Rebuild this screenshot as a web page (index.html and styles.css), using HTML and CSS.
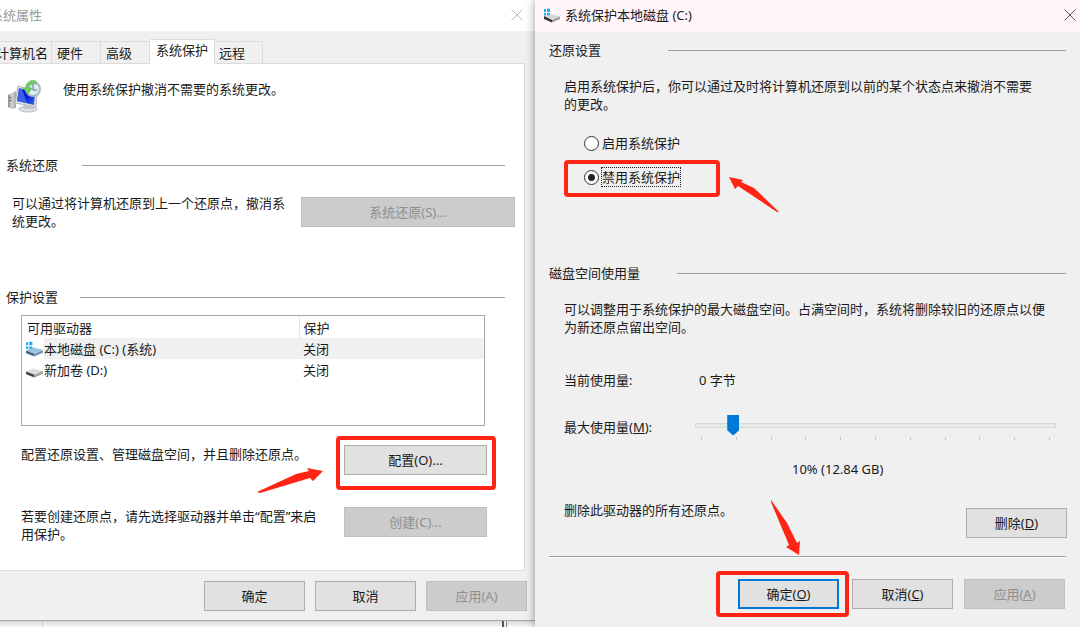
FILE: index.html
```
<!DOCTYPE html>
<html lang="zh-CN">
<head>
    <meta charset="UTF-8">
    <title>系统保护</title>
    <link rel="stylesheet" href="styles.css">
</head>
<body>

    <div class="left-side">
        <div class="window">
            <div class="title-bar inactive">
                <span class="title cut-title">系统属性</span>
                <button class="close" aria-label="关闭">
                    <svg width="12" height="12" viewBox="0 0 12 12"><path d="M0.5 0.5L11.5 11.5M11.5 0.5L0.5 11.5" stroke="currentColor" fill="none"/></svg>
                </button>
            </div>

            <div class="tabs">
                <button class="tab tab-first">计算机名</button>
                <button class="tab">硬件</button>
                <button class="tab">高级</button>
                <button class="tab active">系统保护</button>
                <button class="tab tab-last">远程</button>
            </div>

            <div class="panel">
                <div class="intro">
                    <svg width="34" height="34" viewBox="0 0 34 34">
                        <defs>
                            <linearGradient id="screen" x1="0" y1="0" x2="1" y2="1">
                                <stop offset="0" stop-color="#0a1fb8"/>
                                <stop offset="0.5" stop-color="#0a18d0"/>
                                <stop offset="1" stop-color="#2f6df0"/>
                            </linearGradient>
                            <linearGradient id="tower" x1="0" y1="0" x2="1" y2="0">
                                <stop offset="0" stop-color="#8d8d8d"/>
                                <stop offset="0.5" stop-color="#d6d6d6"/>
                                <stop offset="1" stop-color="#a5a5a5"/>
                            </linearGradient>
                        </defs>
                        <path d="M0 15L8 11V28L4 29L0 27Z" fill="url(#tower)"/>
                        <path d="M1 17L4 18M1 20L4 21" stroke="#777"/>
                        <ellipse cx="20" cy="29" rx="9" ry="3" fill="#e0e2e4" stroke="#b8bcbf"/>
                        <path d="M16 24L25 26L26 29H15Z" fill="#c4c8cb"/>
                        <path d="M10 6L29 12L28 27L7 23Z" fill="#dfe3e6" stroke="#b4b8bb"/>
                        <path d="M11 8L27 13L26 25L9 21Z" fill="url(#screen)"/>
                        <path d="M11 8L14 9L19 23L9 21Z" fill="#6aa5ff" opacity="0.5"/>
                        <circle cx="25" cy="9" r="7" fill="#dcecf2" stroke="#a9bcc4" stroke-width="2"/>
                        <path d="M25 4V10H29" stroke="#5c7480" fill="none"/>
                        <path d="M28 1C23 -1 18 2 18 8L15 8L20 14L24 8H21C21 5 24 3 28 4Z" fill="#6fd066" stroke="#43a648" stroke-width="0.5"/>
                    </svg>
                    <p>使用系统保护撤消不需要的系统更改。</p>
                </div>

                <h2 class="section restore-head">系统还原</h2>
                <div class="row restore-row">
                    <p>可以通过将计算机还原到上一个还原点，撤消系<br>统更改。</p>
                    <button class="btn restore-btn" disabled>系统还原(S)...</button>
                </div>

                <h2 class="section protect-head">保护设置</h2>
                <div class="drive-box">
                    <table class="drives">
                        <thead>
                            <tr><th class="name-col">可用驱动器</th><th>保护</th></tr>
                        </thead>
                        <tbody>
                            <tr class="selected">
                                <td>
                                    <div class="drive">
                                        <svg width="18" height="16" viewBox="0 0 18 16">
                                            <path d="M1 2L3 2V5H1ZM4 1.700L7 1.500V5H4ZM1 6H3V8.500H1ZM4 6H7V9H4Z" fill="#12b2f0"/>
                                            <path d="M1 10L8 7L17 9.500L9 13Z" fill="#9fc3de"/>
                                            <path d="M1 10L9 13V15.500L1 12.500Z" fill="#49657a"/>
                                            <path d="M9 13L17 9.500V12L9 15.500Z" fill="#7198b5"/>
                                        </svg>
                                        <span>本地磁盘 (C:) (系统)</span>
                                    </div>
                                </td>
                                <td>关闭</td>
                            </tr>
                            <tr>
                                <td>
                                    <div class="drive">
                                        <svg width="18" height="16" viewBox="0 0 18 16">
                                            <path d="M1 10L8 7L17 9.500L9 13Z" fill="#dcdcdc"/>
                                            <path d="M1 10L9 13V15.500L1 12.500Z" fill="#444"/>
                                            <path d="M9 13L17 9.500V12L9 15.500Z" fill="#a3a3a3"/>
                                        </svg>
                                        <span>新加卷 (D:)</span>
                                    </div>
                                </td>
                                <td>关闭</td>
                            </tr>
                        </tbody>
                    </table>
                </div>

                <div class="row action-row">
                    <p>配置还原设置、管理磁盘空间，并且删除还原点。</p>
                    <div class="marked mark-config">
                        <button class="btn action-btn">配置(O)...</button>
                        <svg class="arrow arrow-config" width="68" height="28" viewBox="0 0 68 28"><path d="M1 25L40 7L53 4L51 1L67 4L57 14L54 11L4 26Z" fill="#ff2414"/></svg>
                    </div>
                </div>
                <div class="row action-row create-row">
                    <p>若要创建还原点，请先选择驱动器并单击“配置”来启<br>用保护。</p>
                    <button class="btn action-btn" disabled>创建(C)...</button>
                </div>
            </div>

            <div class="buttons left-buttons">
                <button class="btn">确定</button>
                <button class="btn">取消</button>
                <button class="btn" disabled>应用(A)</button>
            </div>
        </div>
        <div class="behind"><span class="edge"></span><span class="edge edge-dark"></span></div>
    </div>

    <div class="window dialog">
        <div class="title-bar">
            <svg width="18" height="16" viewBox="0 0 18 16">
                <path d="M1 2L3 2V5H1ZM4 1.700L7 1.500V5H4ZM1 6H3V8.500H1ZM4 6H7V9H4Z" fill="#12b2f0"/>
                <path d="M1 10L8 7L17 9.500L9 13Z" fill="#d4d8d6"/>
                <path d="M1 9L9 13V15.500L1 12Z" fill="#333"/>
                <path d="M9 13L17 9.500V12L9 15.500Z" fill="#9a9d9b"/>
            </svg>
            <span class="title">系统保护本地磁盘 (C:)</span>
            <button class="close" aria-label="关闭">
                <svg width="12" height="12" viewBox="0 0 12 12"><path d="M0.5 0.5L11.5 11.5M11.5 0.5L0.5 11.5" stroke="currentColor" fill="none"/></svg>
            </button>
        </div>

        <div class="dialog-body">
            <h2 class="section settings-head">还原设置</h2>
            <p class="desc">启用系统保护后，你可以通过及时将计算机还原到以前的某个状态点来撤消不需要<br>的更改。</p>

            <div class="radios">
                <label class="radio"><input type="radio" name="protect"><span>启用系统保护</span></label>
                <div class="marked mark-radio">
                    <label class="radio"><input type="radio" name="protect" checked><span class="focused">禁用系统保护</span></label>
                    <svg class="arrow arrow-radio" width="54" height="38" viewBox="0 0 54 38"><path d="M2 2L16 5L14 7L27 13L52 37L50 37L11 11L8 14Z" fill="#ff2414"/></svg>
                </div>
            </div>

            <h2 class="section usage-head">磁盘空间使用量</h2>
            <p class="desc">可以调整用于系统保护的最大磁盘空间。占满空间时，系统将删除较旧的还原点以便<br>为新还原点留出空间。</p>

            <div class="usage">
                <span>当前使用量:</span>
                <span class="used">0 字节</span>
                <label for="max-usage">最大使用量(<u>M</u>):</label>
                <div class="slider">
                    <input type="range" id="max-usage" min="0" max="100" value="9">
                    <div class="ticks"><i></i><i></i><i></i><i></i><i></i><i></i><i></i><i></i><i></i><i></i><i></i></div>
                </div>
            </div>
            <p class="amount">10% (12.84 GB)</p>

            <div class="row delete-row">
                <p>删除此驱动器的所有还原点。</p>
                <button class="btn">删除(<u>D</u>)</button>
            </div>
            <hr>
            <div class="buttons dialog-buttons">
                <div class="marked mark-ok">
                    <button class="btn default">确定(<u>O</u>)</button>
                    <svg class="arrow arrow-ok" width="34" height="60" viewBox="0 0 34 60"><path d="M3 2L19 25L29 45L32 43L31 57L18 49L21 47L3 4Z" fill="#ff2414"/></svg>
                </div>
                <button class="btn">取消(<u>C</u>)</button>
                <button class="btn" disabled>应用(<u>A</u>)</button>
            </div>
        </div>
    </div>

</body>
</html>
```
FILE: styles.css
```
* {
    box-sizing: border-box;
}
body {
    margin: 0;
    min-height: 100vh;
    display: grid;
    grid-template-columns: 535fr 545fr;
    font-family: "Noto Sans", "Noto Sans CJK SC", sans-serif;
    font-size: 13px;
    line-height: 18px;
    color: #1a1a1a;
    background-color: #f0f0f0;
    overflow: hidden;
}
p, h2 {
    margin: 0;
    font-size: 13px;
    font-weight: normal;
}
button {
    font: inherit;
    color: inherit;
}
svg {
    display: block;
    flex: none;
}
.left-side {
    display: flex;
    flex-direction: column;
    min-width: 0;
    overflow: hidden;
}
.window {
    flex: 1;
    display: flex;
    flex-direction: column;
    min-width: 0;
    background-color: #f0f0f0;
}
.left-side .window {
    border-bottom: 1px solid #a8a8a8;
}
.behind {
    height: 6px;
    display: flex;
    justify-content: space-between;
    padding: 0 28px 0 42px;
    background: linear-gradient(#d8d8d8, #f8f8f8);
}
.edge {
    width: 1px;
    background-color: #ccc;
}
.edge-dark {
    width: 5px;
    background-color: #eee;
    border-left: 2px solid #555;
    border-right: 1px solid #888;
}

/* 标题栏 */
.title-bar {
    display: flex;
    align-items: center;
    height: 32px;
    padding: 0 4px 2px 8px;
    background-color: #fff5fb;
}
.title-bar.inactive {
    height: 31px;
    padding: 0 12px 2px 0;
    background-color: #fff;
    color: #999;
}
.title {
    flex: 1;
    margin-left: 4px;
}
.cut-title {
    margin-left: -10px;
}
.close {
    padding: 0;
    border: none;
    background: none;
    color: #555;
}
.inactive .close {
    color: #bbb;
}

/* 选项卡 */
.tabs {
    display: flex;
    align-items: flex-end;
    height: 32px;
    margin-left: -9px;
}
.tab {
    height: 22px;
    padding: 0 17px 0 5px;
    border: 1px solid #dcdcdc;
    border-left: none;
    border-bottom: none;
    background-color: #f0f0f0;
    text-align: left;
}
.tab-first {
    padding-right: 3px;
}
.tab.active {
    height: 24px;
    padding: 0 6px 2px;
    background-color: #fff;
    margin-bottom: -1px;
    padding-bottom: 4px;
    height: 25px;
    position: relative;
}
.tab-last {
    padding-left: 4px;
}
.panel {
    flex: 1;
    margin-right: 10px;
    padding: 16px 9px 0 0;
    border: 1px solid #dcdcdc;
    border-left: none;
    background-color: #fff;
}
.intro {
    display: flex;
    gap: 21px;
    padding-left: 8px;
}
.section {
    display: flex;
    align-items: center;
}
.section::after {
    content: "";
    flex: 1;
    height: 1px;
    background-color: #a0a0a0;
}
.restore-head {
    gap: 24px;
    margin: 42px 10px 0 6px;
}
.row {
    display: flex;
    justify-content: space-between;
    align-items: flex-start;
}
.restore-row {
    margin-top: 20px;
    padding-left: 12px;
}
.restore-row .restore-btn {
    width: 214px;
    margin-top: 3px;
}
.protect-head {
    gap: 22px;
    margin: 58px 10px 0 6px;
}
.drive-box {
    height: 111px;
    margin: 9px 30px 0 21px;
    border: 1px solid #a5a8b0;
}
.drives {
    width: 100%;
    border-collapse: collapse;
    table-layout: fixed;
}
.drives th, .drives td {
    height: 21px;
    padding: 0 4px;
    font-weight: normal;
    text-align: left;
}
.drives th {
    height: 22px;
    padding-top: 1px;
}
.drives .name-col {
    width: 277px;
    padding-left: 5px;
    border-right: 1px solid #e5e5e5;
}
.drives tbody td:first-child {
    padding-left: 0;
}
.selected {
    background-color: #f0f0f0;
}
.drive {
    display: flex;
    align-items: center;
}
.drive svg {
    width: 22px;
    height: 21px;
    padding-left: 3px;
    background-color: #fff;
}
.action-row {
    margin-top: 19px;
    padding: 0 28px 0 21px;
}
.create-row {
    margin-top: 32px;
}

/* 按钮 */
.btn {
    width: 101px;
    height: 30px;
    padding: 0;
    border: 1px solid #adadad;
    background-color: #e1e1e1;
}
.btn:disabled {
    border-color: #bfbfbf;
    background-color: #ccc;
    color: #8f8f8f;
}
.btn.default {
    border: 2px solid #0078d7;
}
.btn.action-btn {
    width: 143px;
}
.buttons {
    display: flex;
    justify-content: flex-end;
    gap: 11px;
}
.left-buttons {
    gap: 10px;
    padding: 10px 8px 9px;
}
.dialog-buttons {
    padding-right: 1px;
}

/* 红色标注 */
.marked {
    position: relative;
}
.marked::before {
    content: "";
    position: absolute;
    border: 4px solid #ff2414;
    border-radius: 4px;
    pointer-events: none;
}
.mark-config::before {
    inset: -9px -9px -15px -8px;
}
.mark-radio::before {
    inset: -8px -40px -11px -20px;
}
.mark-ok {
    margin-right: 2px;
}
.mark-ok::before {
    inset: -8px -10px -8px -22px;
}
.arrow {
    position: absolute;
}
.arrow-config {
    right: 163px;
    top: 22px;
}
.arrow-radio {
    left: 143px;
    top: 7px;
}
.arrow-ok {
    left: 30px;
    top: -81px;
}

/* 右侧对话框 */
.dialog {
    position: relative;
    box-shadow: 0 0 9px rgba(0, 0, 0, 0.4);
}
.dialog-body {
    padding: 9px 14px 0;
}
.settings-head {
    gap: 67px;
}
.desc {
    margin: 18px 0 0 15px;
    white-space: nowrap;
}
.radios {
    display: flex;
    flex-direction: column;
    align-items: flex-start;
    gap: 16px;
    margin: 21px 0 0 35px;
}
.radio {
    display: flex;
    align-items: center;
    gap: 3px;
}
.radio input {
    appearance: none;
    width: 15px;
    height: 15px;
    margin: 0;
    border: 1px solid #333;
    border-radius: 50%;
    background-color: #fff;
}
.radio input:checked {
    background-image: radial-gradient(circle, #222 3px, transparent 4px);
}
.focused {
    outline: 1px dotted #222;
}
.usage-head {
    gap: 37px;
    margin-top: 78px;
}
.usage {
    display: grid;
    grid-template-columns: 131px 1fr;
    row-gap: 26px;
    margin: 35px 10px 0 15px;
}
.used {
    padding-left: 4px;
}
.usage label {
    padding-top: 3px;
}
.slider input {
    appearance: none;
    display: block;
    width: 100%;
    height: 20px;
    margin: 0;
    background: none;
}
.slider input::-webkit-slider-runnable-track {
    height: 5px;
    border: 1px solid #d6d9d9;
    background-color: #e7eaea;
}
.slider input::-webkit-slider-thumb {
    appearance: none;
    width: 12px;
    height: 21px;
    margin-top: -9px;
    background-color: #0078d7;
    clip-path: polygon(0 0, 100% 0, 100% 75%, 50% 100%, 0 75%);
}
.ticks {
    display: flex;
    justify-content: space-between;
    margin-top: 2px;
    padding: 0 6px;
}
.ticks i {
    width: 1px;
    height: 3px;
    background-color: #c4c4c4;
}
.amount {
    margin: 20px 0 0 243px;
}
.delete-row {
    margin-top: 23px;
    padding-left: 15px;
    margin-right: -1px;
}
.delete-row .btn {
    margin-top: 7px;
}
hr {
    height: 2px;
    margin: 18px 0 21px;
    border: none;
    border-top: 1px solid #a0a0a0;
    border-bottom: 1px solid #fff;
}
```
